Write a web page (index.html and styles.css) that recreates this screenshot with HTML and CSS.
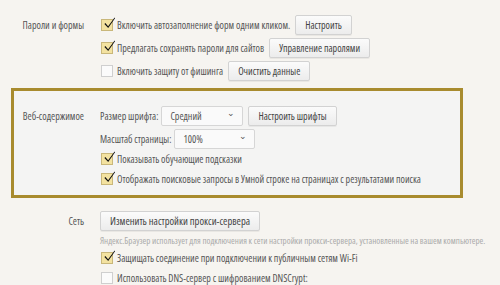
FILE: index.html
```html
<!DOCTYPE html>
<html lang="ru">
<head>
  <meta charset="UTF-8" />
  <title>Настройки</title>
  <link rel="stylesheet" href="styles.css">
</head>
<body>
  <div class="section first">
    <div class="label">Пароли и формы</div>
    <div class="options">
      <div class="row">
        <span class="check on"><svg viewBox="0 0 14 14"><path d="M2.5 7.5 L5.5 11 L12.5 1.5 L13 2.5 L5.6 13 L1.5 8.5 Z"/></svg></span>
        <span>Включить автозаполнение форм одним кликом.</span>
        <button class="btn">Настроить</button>
      </div>
      <div class="row">
        <span class="check on"><svg viewBox="0 0 14 14"><path d="M2.5 7.5 L5.5 11 L12.5 1.5 L13 2.5 L5.6 13 L1.5 8.5 Z"/></svg></span>
        <span>Предлагать сохранять пароли для сайтов</span>
        <button class="btn">Управление паролями</button>
      </div>
      <div class="row">
        <span class="check"></span>
        <span>Включить защиту от фишинга</span>
        <button class="btn">Очистить данные</button>
      </div>
    </div>
  </div>

  <div class="section highlight">
    <div class="label">Веб-содержимое</div>
    <div class="options">
      <div class="row">
        <span>Размер шрифта:</span>
        <div class="select wide">Средний<span class="arrow">&#8964;</span></div>
        <button class="btn">Настроить шрифты</button>
      </div>
      <div class="row">
        <span>Масштаб страницы:</span>
        <div class="select">100%<span class="arrow">&#8964;</span></div>
      </div>
      <div class="row tight">
        <span class="check on"><svg viewBox="0 0 14 14"><path d="M2.5 7.5 L5.5 11 L12.5 1.5 L13 2.5 L5.6 13 L1.5 8.5 Z"/></svg></span>
        <span>Показывать обучающие подсказки</span>
      </div>
      <div class="row tight">
        <span class="check on"><svg viewBox="0 0 14 14"><path d="M2.5 7.5 L5.5 11 L12.5 1.5 L13 2.5 L5.6 13 L1.5 8.5 Z"/></svg></span>
        <span>Отображать поисковые запросы в Умной строке на страницах с результатами поиска</span>
      </div>
    </div>
  </div>

  <div class="section network">
    <div class="label">Сеть</div>
    <div class="options">
      <div class="row">
        <button class="btn">Изменить настройки прокси-сервера</button>
      </div>
      <div class="note">Яндекс.Браузер использует для подключения к сети настройки прокси-сервера, установленные на вашем компьютере.</div>
      <div class="row tight">
        <span class="check on"><svg viewBox="0 0 14 14"><path d="M2.5 7.5 L5.5 11 L12.5 1.5 L13 2.5 L5.6 13 L1.5 8.5 Z"/></svg></span>
        <span>Защищать соединение при подключении к публичным сетям Wi-Fi</span>
      </div>
      <div class="row tight">
        <span class="check"></span>
        <span>Использовать DNS-сервер с шифрованием DNSCrypt:</span>
      </div>
    </div>
  </div>
</body>
</html>
```
FILE: styles.css
```css
body {
  margin: 0;
  background-color: #f6f4f0;
  font-family: "Open Sans", sans-serif;
  font-stretch: 85%;
  font-size: 10px;
  color: #555;
  overflow: hidden;
}

.section {
  display: flex;
  gap: 16px;
}

.label {
  width: 84px;
  text-align: right;
  line-height: 20px;
  white-space: nowrap;
  flex-shrink: 0;
}

.options {
  display: flex;
  flex-direction: column;
  gap: 3px;
}

.row {
  display: flex;
  align-items: center;
  height: 20px;
  white-space: nowrap;
}

.row.tight {
  margin-top: -3px;
}

.first {
  padding-top: 15px;
}

.highlight {
  margin: 7px 0 0 11px;
  width: 446px;
  border: 3px solid #a88b2e;
  background: #f4f4f3;
  padding: 15px 0 6px 0;
}

.highlight .label {
  width: 70px;
}

.network {
  margin-top: 13px;
}

.check {
  width: 10px;
  height: 10px;
  border: 1px solid #cfcfcf;
  background: #fbfbfb;
  margin: 0 4px 0 1px;
  position: relative;
  flex-shrink: 0;
}

.check.on {
  background: #f3e2a0;
  border-color: #c9b77a;
}

.check svg {
  position: absolute;
  left: 1px;
  top: -4px;
  width: 13px;
  height: 13px;
  fill: #111;
}

.btn {
  font-family: inherit;
  font-stretch: inherit;
  font-size: 10px;
  color: #444;
  height: 20px;
  padding: 0 9px;
  margin-left: 5px;
  border: 1px solid #d2d2d2;
  border-radius: 2px;
  background: linear-gradient(#fbfbfb, #ececec);
  box-shadow: 0 1px 0 rgba(0,0,0,0.05);
}

.network .btn {
  margin-left: 0;
  padding: 0 9px;
  font-size: 10.5px;
}

.select {
  position: relative;
  height: 18px;
  line-height: 18px;
  width: 71px;
  padding-left: 8px;
  margin-left: 3px;
  border: 1px solid #d6d6d6;
  border-radius: 2px;
  background: #fafafa;
}

.select.wide {
  width: 72px;
}

.arrow {
  position: absolute;
  right: 7px;
  top: -3px;
  font-size: 9px;
}

.note {
  font-size: 9px;
  color: #aaa;
  line-height: 14px;
  white-space: nowrap;
}
```
